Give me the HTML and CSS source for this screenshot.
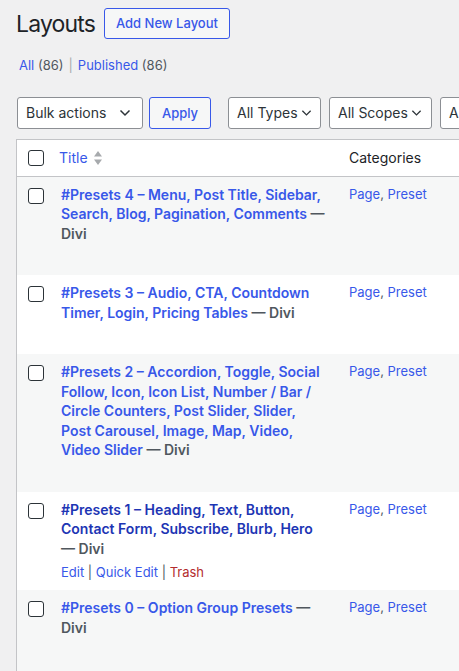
FILE: index.html
```html
<!DOCTYPE html>
<html lang="en">
<head>
<meta charset="utf-8">
<title>Layouts</title>
<link rel="stylesheet" href="styles.css">
</head>
<body>
<div class="wrap">
  <div class="head">
    <h1 class="page-title">Layouts</h1>
    <a class="title-action" href="#">Add New Layout</a>
  </div>
  <ul class="subsubsub">
    <li><a href="#" class="current">All</a> <span class="count">(86)</span></li>
    <li class="sep">|</li>
    <li><a href="#">Published</a> <span class="count">(86)</span></li>
  </ul>
  <div class="tablenav">
    <div class="select bulk">Bulk actions<svg class="chev" viewBox="0 0 12 8" width="12" height="8"><path d="M1.5 1.5 6 6l4.5-4.5" fill="none" stroke="#2c3338" stroke-width="1.5"/></svg></div>
    <button class="button">Apply</button>
    <div class="select filter types">All Types<svg class="chev" viewBox="0 0 12 8" width="11" height="8"><path d="M1.5 1.5 6 6l4.5-4.5" fill="none" stroke="#2c3338" stroke-width="1.4"/></svg></div>
    <div class="select filter scopes">All Scopes<svg class="chev" viewBox="0 0 12 8" width="11" height="8"><path d="M1.5 1.5 6 6l4.5-4.5" fill="none" stroke="#2c3338" stroke-width="1.4"/></svg></div>
    <div class="select filter">All Authors<svg class="chev" viewBox="0 0 12 8" width="11" height="8"><path d="M1.5 1.5 6 6l4.5-4.5" fill="none" stroke="#2c3338" stroke-width="1.4"/></svg></div>
  </div>
  <table class="list">
    <colgroup><col class="c-cb"><col class="c-title"><col class="c-cat"><col></colgroup>
    <thead>
      <tr>
        <td class="cb"><span class="box"></span></td>
        <th class="col-title"><a href="#">Title</a><svg class="sort" viewBox="0 0 10 18" width="10" height="18"><path d="M5 2 9 7.5H1z M5 16 9 10.5H1z" fill="#a7aaad"/></svg></th>
        <th class="col-cat">Categories</th>
        <th></th>
      </tr>
    </thead>
    <tbody>
      <tr class="alt">
        <td class="cb"><span class="box"></span></td>
        <td class="title"><strong><a href="#">#Presets 4 – Menu, Post Title, Sidebar, Search, Blog, Pagination, Comments</a> — <span class="state">Divi</span></strong><div class="row-actions hidden">Edit | Quick Edit | Trash</div></td>
        <td class="cat"><a href="#">Page</a>, <a href="#">Preset</a></td>
        <td></td>
      </tr>
      <tr>
        <td class="cb"><span class="box"></span></td>
        <td class="title"><strong><a href="#">#Presets 3 – Audio, CTA, Countdown Timer, Login, Pricing Tables</a> — <span class="state">Divi</span></strong><div class="row-actions hidden">Edit | Quick Edit | Trash</div></td>
        <td class="cat"><a href="#">Page</a>, <a href="#">Preset</a></td>
        <td></td>
      </tr>
      <tr class="alt">
        <td class="cb"><span class="box"></span></td>
        <td class="title"><strong><a href="#">#Presets 2 – Accordion, Toggle, Social Follow, Icon, Icon List, Number / Bar / Circle Counters, Post Slider, Slider, Post Carousel, Image, Map, Video, Video Slider</a> — <span class="state">Divi</span></strong><div class="row-actions hidden">Edit | Quick Edit | Trash</div></td>
        <td class="cat"><a href="#">Page</a>, <a href="#">Preset</a></td>
        <td></td>
      </tr>
      <tr class="hover">
        <td class="cb"><span class="box"></span></td>
        <td class="title"><strong><a href="#">#Presets 1 – Heading, Text, Button, Contact Form, Subscribe, Blurb, Hero</a> — <span class="state">Divi</span></strong><div class="row-actions"><a href="#">Edit</a> <span class="bar">|</span> <a href="#">Quick Edit</a> <span class="bar">|</span> <a href="#" class="trash">Trash</a></div></td>
        <td class="cat"><a href="#">Page</a>, <a href="#">Preset</a></td>
        <td></td>
      </tr>
      <tr class="alt last">
        <td class="cb"><span class="box"></span></td>
        <td class="title"><strong><a href="#">#Presets 0 – Option Group Presets</a> — <span class="state">Divi</span></strong><div class="row-actions hidden">Edit | Quick Edit | Trash</div></td>
        <td class="cat"><a href="#">Page</a>, <a href="#">Preset</a></td>
        <td></td>
      </tr>
    </tbody>
  </table>
</div>
</body>
</html>
```
FILE: styles.css
```css
* { box-sizing: border-box; }
html, body { margin: 0; padding: 0; }
body {
  background: #f0f0f1;
  color: #3c434a;
  font-family: Inter, "Noto Sans", "Liberation Sans", sans-serif;
  font-size: 13px;
  line-height: 1.4;
  overflow: hidden;
  width: 459px;
  height: 671px;
}
a { color: #3858e9; text-decoration: none; }
.wrap { padding-left: 16px; width: 700px; }
.head { display: flex; align-items: center; height: 31px; margin-top: 8px; }
.page-title {
  margin: 0;
  font-size: 23px;
  font-weight: 400;
  line-height: 30px;
  color: #1d2327;
  letter-spacing: -0.85px;
}
.title-action {
  margin-left: 9px;
  height: 31px;
  padding: 0 11px;
  display: flex;
  align-items: center;
  border: 1px solid #3858e9;
  border-radius: 3px;
  background: #f6f7f7;
  font-size: 13px;
  font-weight: 500;
  color: #3858e9;
}
.subsubsub {
  list-style: none;
  margin: 16px 0 0 3px;
  padding: 0;
  display: flex;
  gap: 5px;
  font-size: 13px;
  line-height: 20px;
}
.subsubsub .count { color: #50575e; }
.subsubsub .sep { color: #a7aaad; }
.tablenav { display: flex; align-items: center; margin-top: 22px; height: 32px; white-space: nowrap; }
.select {
  height: 32px;
  display: flex;
  align-items: center;
  background: #fff;
  border: 1px solid #8c8f94;
  border-radius: 3px;
  font-size: 14px;
  color: #2c3338;
  padding: 0 8px;
}
.select.bulk { margin-left: 1px; width: 126px; justify-content: space-between; padding-right: 11px; }
.chev { margin-left: 3px; }
.button {
  margin-left: 6px;
  height: 32px;
  width: 62px;
  border: 1px solid #3858e9;
  border-radius: 3px;
  background: #f6f7f7;
  color: #3858e9;
  font-family: inherit;
  font-size: 13px;
  font-weight: 500;
  padding: 0;
}
.filter { margin-left: 8px; }
.types { margin-left: 17px; width: 93px; }
.scopes { width: 103px; }
.list {
  margin-top: 10px;
  border-collapse: separate;
  border-spacing: 0;
  border: 1px solid #c3c4c7;
  background: #fff;
  width: 640px;
  table-layout: fixed;
}
.c-cb { width: 34px; }
.c-title { width: 288px; }
.c-cat { width: 150px; }
.list td, .list th { padding: 8px 10px; vertical-align: top; text-align: left; }
.list thead td, .list thead th {
  border-bottom: 1px solid #c3c4c7;
  font-size: 14px;
  font-weight: 400;
  line-height: 19.5px;
  color: #1d2327;
  padding-top: 8px;
  padding-bottom: 8px;
}
.list td.cb { padding: 11px 0 0 11px; }
.list thead td.cb { padding-top: 10px; }
.box {
  display: block;
  width: 16px;
  height: 16px;
  border: 1px solid #2c3338;
  border-radius: 3px;
  background: #fff;
}
.list th.col-title { display: flex; align-items: center; gap: 5px; padding-left: 8px; }
.list th.col-cat { padding-left: 10px; }
tr.alt { background: #f6f7f7; }
td.title { font-size: 14px; line-height: 19.5px; padding-right: 10px; }
.list tr.last td.title { padding-bottom: 40px; }
td.title strong { font-weight: 600; color: #50575e; }
tr.hover td.title strong a { color: #1d35b4; }
.state { color: #50575e; }
.row-actions { font-size: 13px; line-height: 20px; padding-top: 4px; color: #50575e; }
.row-actions.hidden { visibility: hidden; }
.row-actions .bar { color: #50575e; }
.row-actions .trash { color: #b32d2e; }
td.cat { font-size: 13px; line-height: 19.5px; color: #50575e; }
```
